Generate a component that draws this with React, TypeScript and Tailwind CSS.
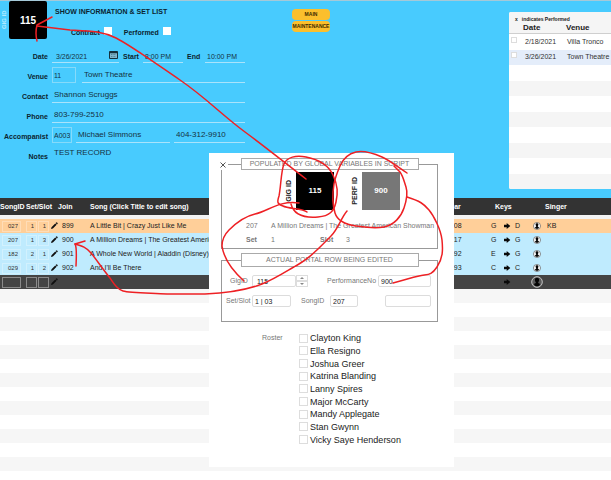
import type { ReactNode } from "react"

interface Song {
  id: string
  set: string
  slot: string
  join: string
  title: string
  year: string
  from: string
  to: string
  singer: string
}

const songs: Song[] = [
  { id: "027", set: "1", slot: "1", join: "899", title: "A Little Bit | Crazy Just Like Me", year: "2008", from: "G", to: "D", singer: "KB" },
  { id: "207", set: "1", slot: "3", join: "900", title: "A Million Dreams | The Greatest American Showman", year: "2017", from: "G", to: "G", singer: "" },
  { id: "182", set: "2", slot: "1", join: "901", title: "A Whole New World | Aladdin (Disney)", year: "1992", from: "E", to: "G", singer: "" },
  { id: "029", set: "1", slot: "2", join: "902", title: "And I'll Be There", year: "1993", from: "C", to: "C", singer: "" },
]

const shows = [
  { date: "2/18/2021", venue: "Villa Tronco" },
  { date: "3/26/2021", venue: "Town Theatre" },
]

const roster = [
  "Clayton King",
  "Ella Resigno",
  "Joshua Greer",
  "Katrina Blanding",
  "Lanny Spires",
  "Major McCarty",
  "Mandy Applegate",
  "Stan Gwynn",
  "Vicky Saye Henderson",
]

const line = "h-4 min-w-0 border-b border-[#a9e3fb] bg-transparent px-0.5 text-[#16323f] outline-none"
const box = "h-4 min-w-0 border border-[#86dafa] bg-transparent px-px text-[7px] text-[#16323f] outline-none"
const formLabel = "text-[7px] leading-3 font-bold whitespace-nowrap text-[#0b2430]"
const modalInput = "h-3 min-w-0 rounded-xs border border-[#dcdcdc] bg-white px-0.5 text-[7px] text-[#222] outline-none"
const modalLabel = "text-[7px] text-[#777]"

function FormRow({ label, htmlFor, children }: { label: string; htmlFor: string; children: ReactNode }) {
  return (
    <div className="flex h-5 items-end gap-1 text-[8px]">
      <label htmlFor={htmlFor} className={`${formLabel} w-12 shrink-0 text-right`}>
        {label}
      </label>
      {children}
    </div>
  )
}

function PencilIcon() {
  return (
    <svg viewBox="0 0 8 8" className="size-2" aria-hidden="true">
      <path d="M1 7 1.5 5.2 5.2 1.5 6.6 2.8 2.9 6.5ZM5.6 1.1 6.3.5q.3-.3.7 0l.6.6q.3.3 0 .7l-.6.6Z" fill="#111" />
    </svg>
  )
}

function ArrowIcon() {
  return (
    <svg viewBox="0 0 8 8" className="size-2" aria-hidden="true">
      <path d="M1 2.8h2.7V.9L7.3 4 3.7 7.1V5.2H1Z" fill="#0a0a0a" />
    </svg>
  )
}

function PersonIcon({ large }: { large?: boolean }) {
  return (
    <svg viewBox="0 0 12 12" className={large ? "size-3" : "size-2"} aria-hidden="true">
      <circle cx="6" cy="6" r="5.3" fill={large ? "#5a5a5a" : "#fff"} stroke={large ? "#c4c4c4" : "#555"} strokeWidth="1" />
      <path d="M6 1.8c1.400 0 2.100.9 2.100 2.100S7.400 6 7.200 6.300v.6l1.600.8V9q-1.200 1.300-2.800 1.300T3.200 9V7.700l1.600-.8v-.6C4.600 6 3.900 5.100 3.900 3.900S4.600 1.800 6 1.800Z" fill="#050505" />
    </svg>
  )
}

function ShowForm() {
  return (
    <form className="w-[245px] shrink-0">
      <div className="flex h-[42px]">
        <div className="h-8 w-[9px] rotate-180 pt-1 text-[6px] leading-[9px] font-bold text-[#b9ecff] [writing-mode:vertical-rl]">
          GIG ID
        </div>
        <output className="flex size-[38px] shrink-0 items-center justify-center rounded-xs bg-black text-[10px] font-bold text-white">
          115
        </output>
        <div className="pl-2">
          <h1 className="pt-1 text-[7px] leading-3.5 font-bold whitespace-nowrap text-[#0b2430]">SHOW INFORMATION &amp; SET LIST</h1>
          <div className="flex h-5 items-end gap-3 pl-4">
            <label className={`${formLabel} flex items-center gap-1`}>
              Contract
              <input type="checkbox" className="mb-1 size-2 appearance-none bg-white" />
            </label>
            <label className={`${formLabel} flex items-center gap-1`}>
              Performed
              <input type="checkbox" className="mb-1 size-2 appearance-none bg-white" />
            </label>
          </div>
        </div>
      </div>

      <FormRow label="Date" htmlFor="date">
        <div className="flex w-[67px] items-center border-b border-[#a9e3fb]">
          <input id="date" defaultValue="3/26/2021" className="h-[15px] w-[57px] px-1 pt-1 text-[7px] text-[#16323f] outline-none" />
          <svg viewBox="0 0 9 8" className="h-2 w-[9px]" aria-hidden="true">
            <path d="M.5.5h8v7h-8Z" fill="#7fb6cc" stroke="#14303d" />
            <path d="M.5 1.500h8" stroke="#14303d" strokeWidth="1.500" />
            <path d="M2 3.500h5M2 5.500h5" stroke="#3b6577" strokeWidth=".6" strokeDasharray="1 .6" />
          </svg>
        </div>
        <label htmlFor="start" className={`${formLabel} w-4`}>Start</label>
        <input id="start" defaultValue="8:00 PM" className={`${line} w-10 pt-1 text-[7px]`} />
        <label htmlFor="end" className={`${formLabel} w-3.5`}>End</label>
        <input id="end" defaultValue="10:00 PM" className={`${line} w-10 pt-1 text-[7px]`} />
      </FormRow>
      <FormRow label="Venue" htmlFor="venue">
        <input id="venue" defaultValue="11" className={`${box} w-6`} />
        <input aria-label="Venue name" defaultValue="Town Theatre" className={`${line} ml-0.5 flex-1`} />
      </FormRow>
      <FormRow label="Contact" htmlFor="contact">
        <input id="contact" defaultValue="Shannon Scruggs" className={`${line} flex-1`} />
      </FormRow>
      <FormRow label="Phone" htmlFor="phone">
        <input id="phone" defaultValue="803-799-2510" className={`${line} flex-1`} />
      </FormRow>
      <FormRow label="Accompanist" htmlFor="accompanist">
        <input id="accompanist" defaultValue="A003" className={`${box} w-5`} />
        <input aria-label="Accompanist name" defaultValue="Michael Simmons" className={`${line} w-[94px]`} />
        <input aria-label="Accompanist phone" defaultValue="404-312-9910" className={`${line} flex-1`} />
      </FormRow>
      <FormRow label="Notes" htmlFor="notes">
        <textarea id="notes" defaultValue="TEST RECORD" className="h-4 flex-1 resize-none overflow-hidden px-0.5 leading-3 text-[#16323f] outline-none" />
      </FormRow>
    </form>
  )
}

function ShowPortal() {
  return (
    <div className="mt-[11px] ml-auto h-[177px] w-[102px] shrink-0 overflow-hidden rounded-l-xs bg-white">
      <div className="h-[22px] border-b border-[#cfcfcf] bg-[#f5f5f5] pt-1 text-[#222]">
        <p className="flex gap-1 pl-1.5 text-[5px] leading-[7px] font-bold">
          <span>x</span> indicates Performed
        </p>
        <div className="flex pl-3.5 text-[8px] leading-[10px] font-bold">
          <span className="w-[43px]">Date</span>
          <span>Venue</span>
        </div>
      </div>
      <ul className="grid h-[155px] auto-rows-fr text-[7px]">
        {Array.from({ length: 10 }, (_, i) => {
          const show = shows[i]
          const tone = i === 1 ? "bg-[#e4edfa]" : i % 2 ? "bg-[#f5f5f5]" : "bg-white"
          return (
            <li key={i} className={`flex items-center pl-0.5 whitespace-nowrap text-[#333] ${tone}`}>
              {show && (
                <>
                  <input type="checkbox" aria-label={show.date} className="mb-1 size-1.5 shrink-0 appearance-none border border-[#ddd] bg-white" />
                  <span className="w-[42px] pl-2 leading-3">{show.date}</span>
                  <span className="pl-2 leading-3">{show.venue}</span>
                </>
              )}
            </li>
          )
        })}
      </ul>
    </div>
  )
}

function SongRow({ song, tone }: { song?: Song; tone: string }) {
  const cell = song
    ? "block h-[11px] border border-white/30 bg-transparent px-0.5 text-right text-[6px] text-[#333] outline-none"
    : "block h-[11px] border border-[#8a8a8a] bg-transparent outline-none"
  return (
    <tr className={`h-3.5 ${tone}`}>
      <td className="pl-0.5"><input aria-label="SongID" defaultValue={song?.id} className={`${cell} w-[19px]`} /></td>
      <td className="pl-0.5"><input aria-label="Set" defaultValue={song?.set} className={`${cell} w-[11px]`} /></td>
      <td><input aria-label="Slot" defaultValue={song?.slot} className={`${cell} w-[11px]`} /></td>
      <td><PencilIcon /></td>
      <td className="pl-1">{song?.join}</td>
      <td className="truncate pl-1">{song?.title}</td>
      <td>{song?.year}</td>
      <td>
        <div className="flex items-center">
          <span className="w-3">{song?.from}</span>
          <ArrowIcon />
          <span className="pl-1">{song?.to}</span>
        </div>
      </td>
      <td>
        <div className="flex items-center">
          <span className="flex w-3 justify-center"><PersonIcon large={!song} /></span>
          <span className="pl-1">{song?.singer}</span>
        </div>
      </td>
    </tr>
  )
}

function SetList() {
  return (
    <table className="w-full table-fixed border-separate border-spacing-0 text-[7px] leading-[10px] text-[#222]">
      <colgroup>
        <col className="w-6" />
        <col className="w-3.5" />
        <col className="w-3" />
        <col className="w-2" />
        <col className="w-7" />
        <col />
        <col className="w-[45px]" />
        <col className="w-10" />
        <col className="w-20" />
      </colgroup>
      <thead>
        <tr className="h-[21px] bg-[#333] text-left whitespace-nowrap text-white [&>th]:border-b-4 [&>th]:border-[#f3f3f3]">
          <th>SongID</th>
          <th colSpan={3} className="pl-0.5">Set/Slot</th>
          <th>Join</th>
          <th className="pl-1">Song (Click Title to edit song)</th>
          <th>Year</th>
          <th className="pl-1">Keys</th>
          <th className="pl-3.5">Singer</th>
        </tr>
      </thead>
      <tbody>
        {songs.map((song, i) => (
          <SongRow key={song.id} song={song} tone={i === 0 ? "bg-[#ffcf99]" : "bg-[#bfebfe]"} />
        ))}
        <SongRow tone="bg-[#444]" />
      </tbody>
    </table>
  )
}

function IdTile({ label, value, tone }: { label: string; value: string; tone: string }) {
  return (
    <div className="flex items-center gap-0.5">
      <span className="rotate-180 text-[7px] leading-[10px] font-bold text-[#222] [writing-mode:vertical-rl]">{label}</span>
      <output className={`flex size-[38px] items-center justify-center text-[8px] font-bold text-white ${tone}`}>{value}</output>
    </div>
  )
}

function EditDialog() {
  return (
    <div role="dialog" aria-label="Edit performance" className="absolute top-[153px] left-[209px] h-[314px] w-[245px] bg-white pt-[5px] pr-4 pl-3">
      <button type="button" aria-label="Close" className="absolute top-[7px] left-2 flex h-2.5 w-[11px] items-center justify-center bg-white">
        <svg viewBox="0 0 6 6" className="size-1.5" aria-hidden="true">
          <path d="M.5.5 5.500 5.500M5.500.5.5 5.500" stroke="#555" />
        </svg>
      </button>

      <fieldset className="h-[91px] border border-[#999] text-[7px] text-[#777]">
        <legend className="mx-auto flex h-3 w-[178px] items-center justify-center border border-[#aaa] whitespace-nowrap">
          POPULATED BY GLOBAL VARIABLES IN SCRIPT
        </legend>
        <div className="flex gap-4 pt-0.5 pl-[62px]">
          <IdTile label="GIG ID" value="115" tone="bg-black" />
          <IdTile label="PERF ID" value="900" tone="bg-[#777]" />
        </div>
        <div className="grid grid-cols-[25px_49px_26px_1fr] gap-y-0.5 pt-2.5 pl-6 leading-3 whitespace-nowrap">
          <span>207</span>
          <span className="col-span-3">A Million Dreams | The Greatest American Showman</span>
          <b>Set</b>
          <span>1</span>
          <b>Slot</b>
          <span>3</span>
        </div>
      </fieldset>

      <fieldset className="mt-1 h-[69px] border border-[#999] text-[#777]">
        <legend className="mx-auto flex h-3.5 w-[178px] items-center justify-center border border-[#aaa] text-[7px] whitespace-nowrap">
          ACTUAL PORTAL ROW BEING EDITED
        </legend>
        <div className="flex items-center pt-2 pr-1.5 pl-1">
          <label htmlFor="gig" className={`${modalLabel} w-[26px] pl-1`}>GigID</label>
          <input id="gig" defaultValue="115" className={`${modalInput} w-11 pl-1`} />
          <div className="flex w-3 flex-col">
            <button type="button" aria-label="Increase" className="flex h-1.5 items-center justify-center border border-[#ddd]">
              <svg viewBox="0 0 4 2" className="h-0.5 w-1"><path d="M0 2 2 0 4 2Z" fill="#888" /></svg>
            </button>
            <button type="button" aria-label="Decrease" className="flex h-1.5 items-center justify-center border border-[#ddd]">
              <svg viewBox="0 0 4 2" className="h-0.5 w-1"><path d="M0 0 2 2 4 0Z" fill="#888" /></svg>
            </button>
          </div>
          <label htmlFor="perf" className={`${modalLabel} ml-auto w-[51px]`}>PerformanceNo</label>
          <input id="perf" defaultValue="900" className={`${modalInput} w-[53px]`} />
        </div>
        <div className="flex items-center pt-2 pr-1.5 pl-1">
          <label htmlFor="slot" className={`${modalLabel} w-[26px]`}>Set/Slot</label>
          <input id="slot" defaultValue="1 | 03" className={`${modalInput} w-[39px]`} />
          <label htmlFor="song" className={`${modalLabel} ml-2.5 w-[29px]`}>SongID</label>
          <input id="song" defaultValue="207" className={`${modalInput} w-7`} />
          <input aria-label="Song name" className={`${modalInput} ml-auto w-[46px]`} />
        </div>
      </fieldset>

      <div className="flex pt-2.5 pl-[41px]">
        <span className="w-[37px] text-[7px] leading-3 text-[#777]">Roster</span>
        <div className="grid h-[114px] auto-rows-fr text-[9px] text-[#222]">
          {roster.map((name) => (
            <label key={name} className="flex items-center gap-0.5 leading-3 whitespace-nowrap">
              <input type="checkbox" className="size-[9px] appearance-none border border-[#ddd] bg-white" />
              {name}
            </label>
          ))}
        </div>
      </div>
    </div>
  )
}

// Red pen strokes that link the IDs across the layout
function PenMarks() {
  return (
    <svg viewBox="0 0 611 480" className="pointer-events-none absolute top-0 left-0 h-[480px] w-[611px]" aria-hidden="true">
      <g fill="none" stroke="#ee2024" strokeWidth="1.5" strokeLinecap="round" strokeLinejoin="round">
        <path d="M306 179C285 163 268 149 245 132S205 97 180 80S130 45 116 38S90 31 70 30L37 26" />
        <path d="M52 17 37 25Q35 33 37 41" />
        <path d="M307 212C303 208 288 209 283 206C277 204 277 202 279 196C281 186 281 171 284 164S296 155 306 157S328 164 333 175S338 193 336 202S330 216 318 217S294 216 291 204" />
        <path d="M299 203C280 200 268 211 255 214S234 225 229 230S222 239 222 246C224 260 234 272 244 281" />
        <path d="M407 173C398 167 389 160 382 157S365 150 356 152S343 159 340 166S335 178 334 184S332 203 335 213S349 225 356 226S374 229 384 227S401 217 404 208S408 193 406 187S403 176 400 172L394 166" />
        <path d="M407 197C420 201 424 204 429 210S441 230 442 240S443 258 437 267S428 274 419 276S405 280 393 283" />
        <path d="M347 211C341 218 338 229 331 236S313 256 299 264S275 279 262 284S227 293 205 294H167C150 293 130 293 123 291S113 282 110 278C102 268 96 259 91 253S82 246 75 244" />
        <path d="M85 241 75 244Q77 247 76 266" />
      </g>
    </svg>
  )
}

export default function App() {
  return (
    <main className="relative min-h-screen overflow-hidden bg-white font-['Liberation_Sans',Arial,sans-serif]">
      <header className="flex h-[198px] border-t border-[#a5c9d8] bg-[#48cbfe]">
        <ShowForm />
        <nav className="ml-[47px] flex w-[38px] flex-col gap-px pt-2">
          <button type="button" className="flex h-[11px] items-center justify-center rounded-sm bg-[#fbbf2d] text-[5px] font-bold text-[#3d2a00]">
            MAIN
          </button>
          <button type="button" className="flex h-[11px] items-center justify-center rounded-sm bg-[#fbbf2d] text-[5px] font-bold text-[#3d2a00]">
            MAINTENANCE
          </button>
        </nav>
        <ShowPortal />
      </header>

      <SetList />
      {/* Empty portal rows */}
      <div aria-hidden="true">
        {Array.from({ length: 13 }, (_, i) => (
          <div key={i} className={i % 2 ? "h-3.5 bg-white" : "h-3.5 bg-[#f6f6f6]"} />
        ))}
      </div>

      <EditDialog />
      <PenMarks />
    </main>
  )
}
